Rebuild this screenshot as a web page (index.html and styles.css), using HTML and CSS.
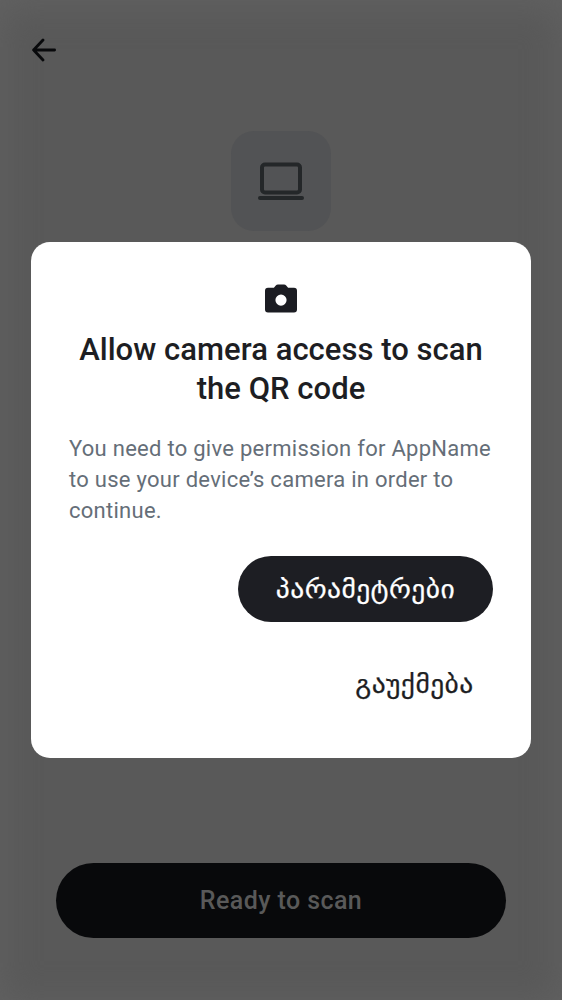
FILE: index.html
```html
<!DOCTYPE html>
<html lang="ka">
<head>
<meta charset="utf-8">
<title>Camera access</title>
<link rel="stylesheet" href="styles.css">
</head>
<body>
<div class="screen">
  <header class="topbar">
    <svg class="back" viewBox="0 0 24 24" width="24" height="24"><path d="M11 2 1.6 12 11 22M1.6 12H22.6"/></svg>
  </header>
  <div class="device">
    <svg class="laptop" viewBox="0 0 46 38" width="46" height="38"><rect x="4" y="2.5" width="38" height="28" rx="3"/><path d="M2 36H44"/></svg>
  </div>
  <button class="ready">Ready to scan</button>
</div>
<div class="overlay">
  <section class="dialog" role="dialog">
    <svg class="camera" viewBox="0 0 32 30" width="32" height="30"><path fill-rule="evenodd" d="M10.8 1.4Q11.6.5 13 .5H19Q20.4.5 21.2 1.4L23.1 3.8H29Q32 3.8 32 6.8V25.5Q32 28.5 29 28.5H3Q0 28.5 0 25.5V6.8Q0 3.8 3 3.8H8.9ZM16 10.5a5.6 5.6 0 1 0 0 11.2a5.6 5.6 0 1 0 0-11.2Z"/></svg>
    <h1 class="title">Allow camera access to scan<br>the QR code</h1>
    <p class="text">You need to give permission for AppName<br>to use your device’s camera in order to<br>continue.</p>
    <div class="actions">
      <button class="settings"><span class="label">პარამეტრები</span></button>
      <button class="cancel"><span class="label">გაუქმება</span></button>
    </div>
  </section>
</div>
</body>
</html>
```
FILE: styles.css
```css
* { box-sizing: border-box; }
body {
  margin: 0;
  font-family: Roboto, "Noto Sans", sans-serif;
}
button {
  border: 0;
  padding: 0;
  font-family: inherit;
  display: block;
}
.screen {
  width: 562px;
  height: 1000px;
  background: #595959;
  box-shadow: inset 0 5px 36px #626262;
  display: flex;
  flex-direction: column;
  align-items: center;
}
.topbar {
  width: 100%;
  height: 131px;
  padding: 38px 0 0 32px;
}
.back {
  display: block;
  fill: none;
  stroke: #08090b;
  stroke-width: 2.8;
  stroke-linecap: round;
  stroke-linejoin: round;
}
.device {
  width: 100px;
  height: 100px;
  border-radius: 23px;
  background: #525355;
  padding: 31px 0 0 27px;
}
.laptop {
  display: block;
  fill: none;
  stroke: #242729;
  stroke-width: 4;
  stroke-linecap: round;
}
.ready {
  width: 450px;
  height: 75px;
  margin: auto 0 62.5px;
  border-radius: 38px;
  background: #08090b;
  color: #595959;
  font-size: 25px;
  font-weight: 500;
  letter-spacing: .42px;
}
.overlay {
  position: absolute;
  top: 0;
  left: 0;
  width: 562px;
  height: 1000px;
  display: flex;
  align-items: center;
  justify-content: center;
}
.dialog {
  width: 500px;
  height: 516px;
  padding: 42px 38px 0;
  border-radius: 19px;
  background: #fff;
  color: #1d1e23;
}
.camera {
  display: block;
  margin: 0 auto;
  fill: #1b1c22;
}
.title {
  margin: 16px 0 0;
  font-size: 31px;
  font-weight: 500;
  line-height: 39px;
  letter-spacing: .04px;
  text-align: center;
  white-space: nowrap;
}
.text {
  margin: 25px 0 0;
  color: #656e78;
  font-size: 22px;
  line-height: 31px;
  letter-spacing: .27px;
  white-space: nowrap;
}
.actions {
  display: flex;
  flex-direction: column;
  align-items: flex-end;
  gap: 29px;
  margin-top: 30px;
}
.settings,
.cancel {
  height: 66px;
  font-family: "DejaVu Sans", sans-serif;
  font-size: 25px;
  letter-spacing: .4px;
  -webkit-text-stroke: .25px currentColor;
}
.label {
  display: inline-block;
  transform: scaleX(1.1);
}
.settings {
  width: 255px;
  border-radius: 33px;
  background: #1d1e23;
  color: #fff;
}
.cancel {
  margin-right: 19px;
  background: none;
  color: #1d1e23;
}
.cancel .label {
  transform-origin: right;
}
```
